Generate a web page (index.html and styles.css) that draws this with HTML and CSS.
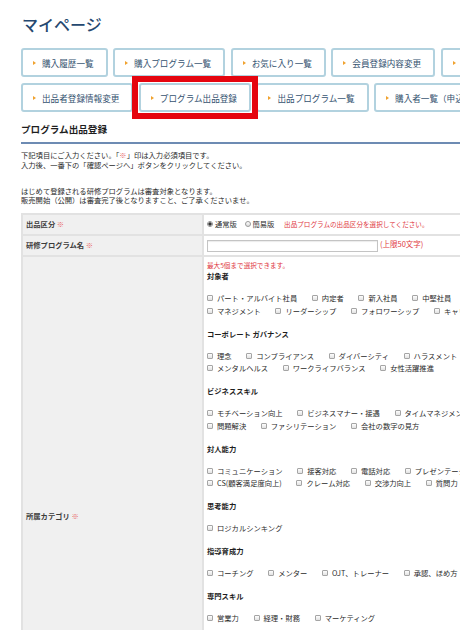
FILE: index.html
```html
<!DOCTYPE html>
<html lang="ja">
<head>
<meta charset="utf-8">
<title>マイページ</title>
<link rel="stylesheet" href="styles.css">
</head>
<body>
<div class="page">
  <h1 class="page-title">マイページ</h1>
  <nav class="menu">
    <div class="menu-row">
      <a class="menu-btn" href="#">購入履歴一覧</a>
      <a class="menu-btn" href="#">購入プログラム一覧</a>
      <a class="menu-btn" href="#">お気に入り一覧</a>
      <a class="menu-btn" href="#">会員登録内容変更</a>
      <a class="menu-btn" href="#">パスワード変更</a>
    </div>
    <div class="menu-row">
      <a class="menu-btn" href="#">出品者登録情報変更</a>
      <a class="menu-btn is-current" href="#">プログラム出品登録</a>
      <a class="menu-btn" href="#">出品プログラム一覧</a>
      <a class="menu-btn" href="#">購入者一覧（申込者一覧）</a>
    </div>
  </nav>

  <section class="section">
    <h2 class="section-title">プログラム出品登録</h2>
    <div class="intro">
      <p>下記項目にご入力ください。「<span class="req">※</span>」印は入力必須項目です。<br>入力後、一番下の「確認ページへ」ボタンをクリックしてください。</p>
      <p>はじめて登録される研修プログラムは審査対象となります。<br>販売開始（公開）は審査完了後となりますこと、ご了承くださいませ。</p>
    </div>

    <table class="form-table">
      <colgroup><col class="col-label"><col></colgroup>
      <tr class="row-short">
        <th>出品区分 <span class="req">※</span></th>
        <td>
          <label class="radio-opt"><input type="radio" name="kubun" checked>通常版</label>
          <label class="radio-opt"><input type="radio" name="kubun">簡易版</label>
          <span class="hint">出品プログラムの出品区分を選択してください。</span>
        </td>
      </tr>
      <tr class="row-short">
        <th>研修プログラム名 <span class="req">※</span></th>
        <td><input class="text-input" type="text"><span class="limit">(上限50文字)</span></td>
      </tr>
      <tr class="row-cat">
        <th>所属カテゴリ <span class="req">※</span></th>
        <td>
          <p class="note">最大5個まで選択できます。</p>

          <p class="cat-title">対象者</p>
          <div class="check-list">
            <div class="check-row">
              <label class="check"><input type="checkbox">パート・アルバイト社員</label>
              <label class="check"><input type="checkbox">内定者</label>
              <label class="check"><input type="checkbox">新入社員</label>
              <label class="check"><input type="checkbox">中堅社員</label>
              <label class="check"><input type="checkbox">管理職</label>
            </div>
            <div class="check-row">
              <label class="check"><input type="checkbox">マネジメント</label>
              <label class="check"><input type="checkbox">リーダーシップ</label>
              <label class="check"><input type="checkbox">フォロワーシップ</label>
              <label class="check"><input type="checkbox">キャリアデザイン</label>
            </div>
          </div>

          <p class="cat-title">コーポレート ガバナンス</p>
          <div class="check-list">
            <div class="check-row">
              <label class="check"><input type="checkbox">理念</label>
              <label class="check"><input type="checkbox">コンプライアンス</label>
              <label class="check"><input type="checkbox">ダイバーシティ</label>
              <label class="check"><input type="checkbox">ハラスメント</label>
            </div>
            <div class="check-row">
              <label class="check"><input type="checkbox">メンタルヘルス</label>
              <label class="check"><input type="checkbox">ワークライフバランス</label>
              <label class="check"><input type="checkbox">女性活躍推進</label>
            </div>
          </div>

          <p class="cat-title">ビジネススキル</p>
          <div class="check-list">
            <div class="check-row">
              <label class="check"><input type="checkbox">モチベーション向上</label>
              <label class="check"><input type="checkbox">ビジネスマナー・接遇</label>
              <label class="check"><input type="checkbox">タイムマネジメント</label>
            </div>
            <div class="check-row">
              <label class="check"><input type="checkbox">問題解決</label>
              <label class="check"><input type="checkbox">ファシリテーション</label>
              <label class="check"><input type="checkbox">会社の数字の見方</label>
            </div>
          </div>

          <p class="cat-title">対人能力</p>
          <div class="check-list">
            <div class="check-row">
              <label class="check"><input type="checkbox">コミュニケーション</label>
              <label class="check"><input type="checkbox">接客対応</label>
              <label class="check"><input type="checkbox">電話対応</label>
              <label class="check"><input type="checkbox">プレゼンテーション</label>
            </div>
            <div class="check-row">
              <label class="check"><input type="checkbox">CS(顧客満足度向上)</label>
              <label class="check"><input type="checkbox">クレーム対応</label>
              <label class="check"><input type="checkbox">交渉力向上</label>
              <label class="check"><input type="checkbox">質問力</label>
            </div>
          </div>

          <p class="cat-title">思考能力</p>
          <div class="check-list">
            <div class="check-row">
              <label class="check"><input type="checkbox">ロジカルシンキング</label>
            </div>
          </div>

          <p class="cat-title">指導育成力</p>
          <div class="check-list">
            <div class="check-row">
              <label class="check"><input type="checkbox">コーチング</label>
              <label class="check"><input type="checkbox">メンター</label>
              <label class="check"><input type="checkbox">OJT、トレーナー</label>
              <label class="check"><input type="checkbox">承認、ほめ方</label>
            </div>
          </div>

          <p class="cat-title">専門スキル</p>
          <div class="check-list">
            <div class="check-row">
              <label class="check"><input type="checkbox">営業力</label>
              <label class="check"><input type="checkbox">経理・財務</label>
              <label class="check"><input type="checkbox">マーケティング</label>
            </div>
          </div>

          <p class="cat-title">業種別</p>
          <div class="check-list">
            <div class="check-row">
              <label class="check"><input type="checkbox">医療・介護</label>
              <label class="check"><input type="checkbox">小売・サービス</label>
            </div>
            <div class="check-row">
              <label class="check"><input type="checkbox">製造</label>
              <label class="check"><input type="checkbox">建設</label>
            </div>
            <div class="check-row">
              <label class="check"><input type="checkbox">IT・情報</label>
              <label class="check"><input type="checkbox">金融</label>
            </div>
          </div>

          <p class="cat-title">その他</p>
          <div class="check-list">
            <div class="check-row">
              <label class="check"><input type="checkbox">その他</label>
            </div>
          </div>
        </td>
      </tr>
    </table>
  </section>
</div>
</body>
</html>
```

FILE: styles.css
```css
* { box-sizing: border-box; }

html, body {
  margin: 0;
  overflow: hidden;
  background: #fff;
}

body {
  font-family: "Noto Sans CJK JP", "Noto Sans", sans-serif;
  color: #2a2a2a;
}

.page {
  width: 640px;
  padding: 14px 0 0 21px;
}

.page-title {
  margin: 0;
  padding-left: 1px;
  font-size: 16px;
  line-height: 21px;
  font-weight: 500;
  color: #254870;
}

/* menu */
.menu {
  margin-top: 13px;
  display: flex;
  flex-direction: column;
  gap: 6px;
}

.menu-row {
  display: flex;
  gap: 5.5px;
}

.menu-btn {
  flex: none;
  display: flex;
  align-items: center;
  height: 29px;
  padding: 0 12px 0 10px;
  border: 2px solid #b2d2df;
  border-radius: 3px;
  background: #fff;
  font-size: 8.6px;
  color: #34526f;
  text-decoration: none;
  white-space: nowrap;
}

.menu-btn::before {
  content: "";
  border-left: 3px solid #f0a22e;
  border-top: 2.5px solid transparent;
  border-bottom: 2.5px solid transparent;
  margin-right: 6px;
}

/* red highlight frame laid over the current item */
.menu-btn.is-current {
  position: relative;
  z-index: 1;
}

.menu-btn.is-current::after {
  content: "";
  position: absolute;
  inset: -9px;
  border: 6px solid #e5050f;
  pointer-events: none;
}

/* section */
.section-title {
  margin: 10px 0 0;
  padding-bottom: 6px;
  font-size: 9.6px;
  line-height: 14px;
  font-weight: bold;
  color: #1e1e1e;
  border-bottom: 2px solid #6d8bb3;
}

.intro {
  margin-top: 7px;
  font-size: 7.3px;
  line-height: 9.5px;
  color: #2a2a2a;
}

.intro p { margin: 0 0 16.5px; }
.intro p:last-child { margin-bottom: 0; }

.req { color: #e86464; }

/* form table */
.form-table {
  width: 600px;
  margin-top: 7px;
  border-collapse: collapse;
  table-layout: fixed;
  font-size: 7.3px;
}

.col-label { width: 181px; }

.form-table th,
.form-table td {
  border: 2px solid #e2e2e2;
  padding: 0 3px;
  vertical-align: middle;
}

.form-table th {
  background: #f0f0f0;
  text-align: left;
  font-weight: bold;
  color: #3c3c3c;
}

.form-table td {
  background: #fff;
  color: #2a2a2a;
}

.row-short th,
.row-short td {
  height: 21px;
}

.radio-opt {
  margin-right: 6px;
  white-space: nowrap;
}

.radio-opt input {
  appearance: none;
  -webkit-appearance: none;
  width: 6px;
  height: 6px;
  margin: 0 2px 0 0;
  border: 1px solid #9a9a9a;
  border-radius: 50%;
  background: linear-gradient(#fff, #dcdcdc);
  vertical-align: middle;
  position: relative;
  top: -1px;
}

.radio-opt input:checked {
  background: radial-gradient(circle, #333 0 1.4px, #f2f2f2 1.9px);
}

.hint {
  margin-left: 2px;
  font-size: 6.6px;
  color: #e0383e;
}

.text-input {
  width: 171px;
  height: 12px;
  margin: 0 2px 0 0;
  padding: 0;
  border: 1px solid #c4c4c4;
  box-shadow: inset 0 1px 1px rgba(0, 0, 0, 0.08);
  vertical-align: middle;
}

.limit {
  font-size: 7.5px;
  color: #e0383e;
}

.row-cat td {
  padding: 4.5px 3px 26px;
}

.note {
  margin: 0;
  font-size: 6.6px;
  line-height: 9px;
  color: #e0383e;
}

.cat-title {
  margin: 0 0 9.5px;
  line-height: 12.5px;
  font-weight: bold;
  color: #1e1e1e;
}

.check-list { margin-bottom: 10.5px; }

.check-row {
  white-space: nowrap;
  line-height: 12.5px;
}

.check { margin-right: 13px; }

.check input {
  appearance: none;
  -webkit-appearance: none;
  width: 6px;
  height: 6px;
  margin: 0 4px 0 0;
  border: 1px solid #a5a5a5;
  border-radius: 1px;
  background: linear-gradient(#fdfdfd, #e2e2e2);
  vertical-align: middle;
  position: relative;
  top: -1px;
}
```
